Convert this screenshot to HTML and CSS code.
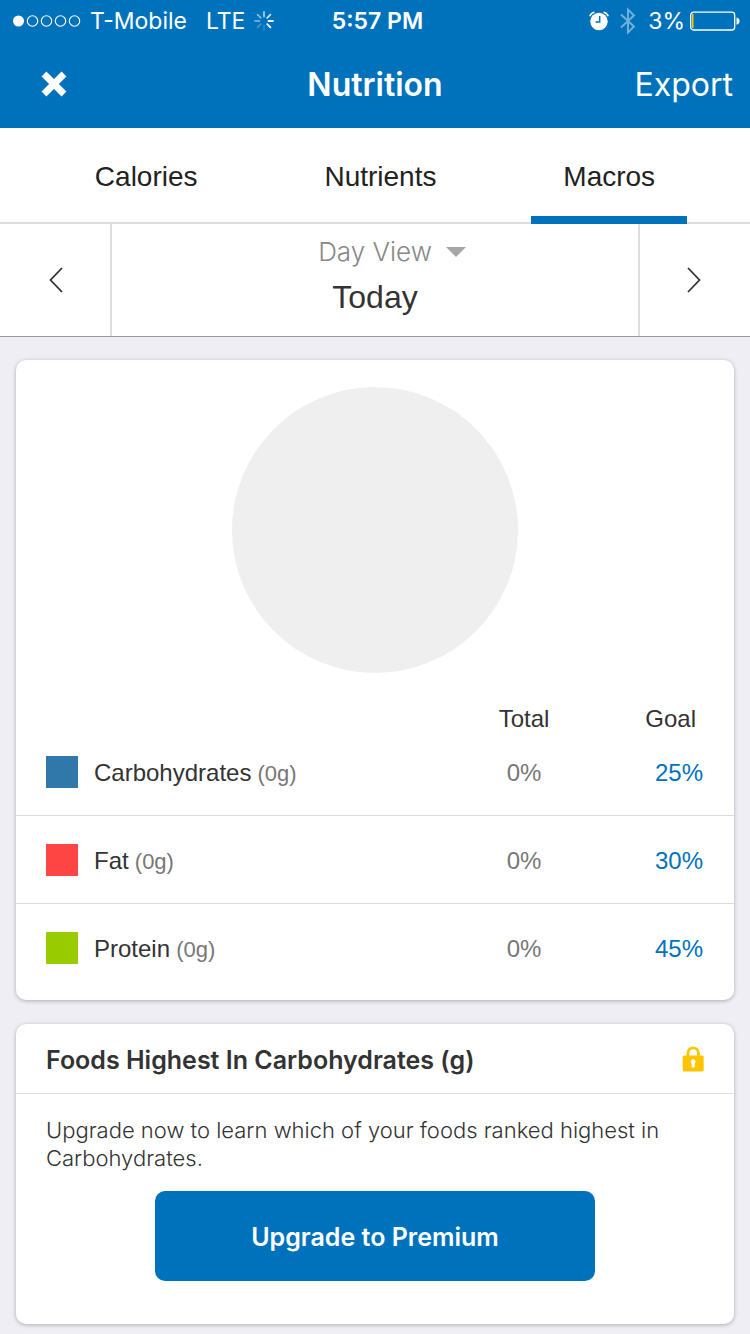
FILE: index.html
```
<!DOCTYPE html>
<html lang="en">
<head>
<meta charset="utf-8">
<meta name="viewport" content="width=device-width, initial-scale=1">
<title>Nutrition</title>
<link rel="stylesheet" href="styles.css">
</head>
<body>
<header class="top">
  <div class="status">
    <div class="status-left">
      <svg class="signal" width="68" height="12" viewBox="0 0 68 12" fill="none" stroke="#fff" stroke-width="1.1">
        <circle cx="5.5" cy="6" r="5.5" fill="#fff" stroke="none"/>
        <circle cx="19.5" cy="6" r="5.200"/><circle cx="33.5" cy="6" r="5.200"/><circle cx="47.5" cy="6" r="5.200"/><circle cx="61.5" cy="6" r="5.200"/>
      </svg>
      <span class="carrier">T-Mobile</span>
      <span class="network">LTE</span>
      <svg width="20" height="20" viewBox="0 0 20 20" stroke="#fff" stroke-width="1.8" stroke-linecap="round">
        <path d="M10 1v4.500" opacity=".65"/><path d="M16.400 3.600l-3.200 3.200" opacity=".8"/><path d="M19 10h-4.500" opacity=".95"/><path d="M16.400 16.400l-3.200-3.200"/>
        <path d="M10 19v-4.500" opacity=".15"/><path d="M3.600 16.400l3.200-3.200" opacity=".25"/><path d="M1 10h4.500" opacity=".4"/><path d="M3.600 3.600l3.200 3.200" opacity=".5"/>
      </svg>
    </div>
    <span class="clock">5:57 PM</span>
    <div class="status-right">
      <svg width="20" height="20" viewBox="0 0 20 20">
        <circle cx="10" cy="10.500" r="8.700" fill="#fff"/>
        <path d="M.8 5.200A6 6 0 0 1 5.500 1.300M19.200 5.200A6 6 0 0 0 14.500 1.300" fill="none" stroke="#fff" stroke-width="1.600"/>
        <path d="M10.700 5v6H6.500" fill="none" stroke="#0072bc" stroke-width="1.500"/>
      </svg>
      <svg class="bluetooth" width="16" height="28" viewBox="0 0 16 28" fill="none" stroke="#fff" stroke-width="1.900">
        <path d="M1 7.500l13 12L8 25.500V2.500l6 6L1 20.500"/>
      </svg>
      <span class="charge">3%</span>
      <svg width="50" height="20" viewBox="0 0 50 20">
        <rect x=".7" y="1.200" width="44" height="17.800" rx="3" fill="none" stroke="#fff" stroke-width="1.300"/>
        <path d="M2 3h1.500v14H2z" fill="#ffc400"/>
        <path d="M46.500 6.500q3 .5 3 3.600t-3 3.600z" fill="#fff"/>
      </svg>
    </div>
  </div>
  <div class="nav">
    <button class="close" type="button" aria-label="Close">
      <svg width="26" height="26" viewBox="0 0 26 26" stroke="#fff" stroke-width="6.800"><path d="M3 3l20 20M23 3L3 23"/></svg>
    </button>
    <h1 class="title">Nutrition</h1>
    <button class="export" type="button">Export</button>
  </div>
</header>

<nav class="tabs">
  <button class="tab" type="button">Calories</button>
  <button class="tab" type="button">Nutrients</button>
  <button class="tab tab-active" type="button" aria-current="page">Macros</button>
</nav>

<section class="period">
  <button class="step" type="button" aria-label="Previous day">
    <svg width="14" height="26" viewBox="0 0 14 26" fill="none" stroke="#333" stroke-width="1.800"><path d="M13 1L1.500 13 13 25"/></svg>
  </button>
  <div class="period-main">
    <button class="view" type="button">Day View
      <svg width="20" height="10" viewBox="0 0 20 10" fill="#a6a6a6"><path d="M0 0h20L10 10z"/></svg>
    </button>
    <div class="date">Today</div>
  </div>
  <button class="step" type="button" aria-label="Next day">
    <svg width="14" height="26" viewBox="0 0 14 26" fill="none" stroke="#333" stroke-width="1.800"><path d="M1 1l11.500 12L1 25"/></svg>
  </button>
</section>

<main class="content">
  <section class="card chart-card">
    <div class="pie"></div>
    <table class="macros">
      <thead>
        <tr><td></td><th class="num" scope="col">Total</th><th class="goal" scope="col">Goal</th></tr>
      </thead>
      <tbody>
        <tr><th class="macro" scope="row"><div class="macro-label"><span class="swatch carbs"></span><span class="macro-name">Carbohydrates<span class="muted grams"> (0g)</span></span></div></th><td class="num muted">0%</td><td class="goal">25%</td></tr>
        <tr><th class="macro" scope="row"><div class="macro-label"><span class="swatch fat"></span><span class="macro-name">Fat<span class="muted grams"> (0g)</span></span></div></th><td class="num muted">0%</td><td class="goal">30%</td></tr>
        <tr><th class="macro" scope="row"><div class="macro-label"><span class="swatch protein"></span><span class="macro-name">Protein<span class="muted grams"> (0g)</span></span></div></th><td class="num muted">0%</td><td class="goal">45%</td></tr>
      </tbody>
    </table>
  </section>

  <section class="card">
    <div class="card-head">
      <h2 class="card-title">Foods Highest In Carbohydrates (g)</h2>
      <svg width="22" height="26" viewBox="0 0 22 26">
        <path d="M6 11V7a5.200 5.200 0 0 1 10.400 0v4" fill="none" stroke="#ffc400" stroke-width="2.800"/>
        <rect x=".7" y="9.500" width="21" height="16" rx="1.500" fill="#ffc400"/>
        <path d="M11.200 13.200a2.500 2.500 0 0 1 1.500 4.500V21.500h-3v-3.800a2.500 2.500 0 0 1 1.500-4.500z" fill="#fff"/>
      </svg>
    </div>
    <div class="card-body">
      <p class="pitch">Upgrade now to learn which of your foods ranked highest in Carbohydrates.</p>
      <button class="upgrade" type="button">Upgrade to Premium</button>
    </div>
  </section>
</main>
</body>
</html>
```
FILE: styles.css
```
* { box-sizing: border-box; }
body {
  margin: 0;
  min-height: 100vh;
  background: #efeef4;
  color: #333;
  font-family: "Liberation Sans", Arial, sans-serif;
}
button {
  margin: 0;
  padding: 0;
  border: 0;
  background: none;
  color: inherit;
  font: inherit;
}
svg { display: block; flex: none; }

.top {
  background: #0072bc;
  color: #fff;
  font-family: Inter, sans-serif;
}
.status, .nav {
  display: grid;
  grid-template-columns: 1fr auto 1fr;
  align-items: center;
}
.status { height: 40px; padding: 1px 10px 0 13px; font-size: 23px; }
.status-left, .status-right { display: flex; align-items: center; }
.status-right { justify-content: flex-end; }
.carrier { margin: 0 19px 0 9px; }
.network { margin-right: 9px; }
.clock { padding-left: 2px; font-weight: 600; }
.bluetooth { margin: 0 12px 0 11px; opacity: .45; }
.charge { margin-right: 5px; }
.nav { height: 88px; padding: 0 17px; }
.close { justify-self: start; margin-left: 24px; }
.title { margin: 0; font-size: 32px; font-weight: 600; }
.export { justify-self: end; font-size: 32px; }

.tabs {
  display: flex;
  justify-content: space-evenly;
  height: 96px;
  background: linear-gradient(#ddd, #ddd) bottom / 100% 2px no-repeat #fff;
  color: #222;
  font-size: 28px;
}
.tab { padding: 10px 32px 0; border-bottom: 8px solid transparent; }
.tab-active { border-bottom-color: #0072bc; }

.period {
  display: grid;
  grid-template-columns: 112px 1fr 112px;
  height: 113px;
  border-bottom: 1px solid #999;
  background: #fff;
}
.step { display: flex; align-items: center; justify-content: center; }
.step:first-child { box-shadow: inset -2px 0 #ddd; }
.step:last-child { box-shadow: inset 2px 0 #ddd; }
.period-main {
  display: flex;
  flex-direction: column;
  align-items: center;
  padding-top: 10px;
}
.view {
  display: flex;
  align-items: center;
  gap: 14px;
  padding-left: 34px;
  color: #888;
  font-family: Inter, sans-serif;
  font-size: 26px;
  font-weight: 300;
  line-height: 36px;
}
.date { padding-top: 7px; font-size: 32px; line-height: 40px; }

.content { display: grid; gap: 24px; padding: 23px 16px 10px; }
.card {
  border-radius: 10px;
  background: #fff;
  box-shadow: 0 1px 4px rgba(0, 0, 0, .28);
}
.chart-card { padding: 27px 0 8px; }
.pie {
  width: 286px;
  height: 286px;
  margin: 0 auto;
  border-radius: 50%;
  background: #efefef;
}
.macros {
  width: 100%;
  table-layout: fixed;
  border-collapse: separate;
  border-spacing: 0;
  font-size: 24px;
}
.macros th, .macros td { padding: 0; font-weight: 400; }
.macros thead th { padding-top: 37px; line-height: 18px; }
.macros tbody th, .macros tbody td { height: 88px; border-bottom: 1px solid #ddd; }
.macros tbody td { padding-top: 2px; }
.macros tbody tr:last-child > * { border-bottom-color: transparent; }
.macros .num { width: 140px; text-align: center; }
.macros .goal { width: 140px; padding-right: 31px; text-align: right; }
.macros thead .goal { padding-right: 38px; }
.macros td.goal { color: #0072bc; }
.macro-label { display: flex; align-items: center; gap: 16px; padding-left: 30px; text-align: left; }
.macro-name { padding-top: 2px; }
.swatch { width: 32px; height: 32px; }
.carbs { background: #3077aa; }
.fat { background: #ff4444; }
.protein { background: #99cc00; }
.macros .muted { color: #777; }
.grams { font-size: 22px; }

.card-head {
  display: flex;
  align-items: center;
  justify-content: space-between;
  height: 70px;
  padding: 0 30px;
  border-bottom: 1px solid #ddd;
}
.card-title { margin: 0; padding-top: 2px; font-family: Inter, sans-serif; font-size: 25px; font-weight: 600; }
.card-body { padding: 22px 30px 43px; }
.pitch {
  margin: 0 0 19px;
  font-family: Inter, sans-serif;
  font-size: 22px;
  font-weight: 300;
  line-height: 28px;
}
.upgrade {
  display: block;
  width: 100%;
  max-width: 440px;
  height: 90px;
  margin: 0 auto;
  padding-top: 2px;
  border-radius: 10px;
  background: #0072bc;
  color: #fff;
  font-family: Inter, sans-serif;
  font-size: 25px;
  font-weight: 600;
}
```
